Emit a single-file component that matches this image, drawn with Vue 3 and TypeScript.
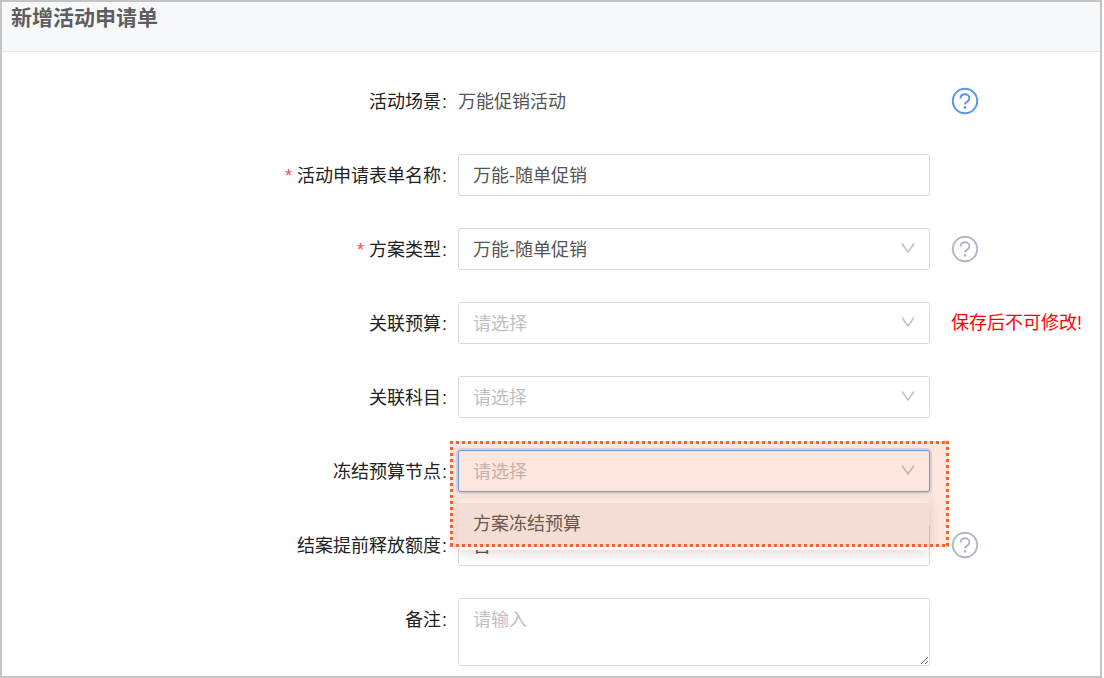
<script setup lang="ts">
interface Field {
  id: string
  label: string
  kind: 'text' | 'input' | 'select' | 'textarea'
  value?: string
  placeholder?: string
  required?: boolean
  help?: 'active' | 'muted'
  note?: string
  open?: boolean
}

const fields: Field[] = [
  { id: 'scene', label: '活动场景', kind: 'text', value: '万能促销活动', help: 'active' },
  { id: 'name', label: '活动申请表单名称', kind: 'input', value: '万能-随单促销', required: true },
  { id: 'plan', label: '方案类型', kind: 'select', value: '万能-随单促销', required: true, help: 'muted' },
  { id: 'budget', label: '关联预算', kind: 'select', placeholder: '请选择', note: '保存后不可修改!' },
  { id: 'subject', label: '关联科目', kind: 'select', placeholder: '请选择' },
  { id: 'node', label: '冻结预算节点', kind: 'select', placeholder: '请选择', open: true },
  { id: 'release', label: '结案提前释放额度', kind: 'input', value: '否', help: 'muted' },
  { id: 'remark', label: '备注', kind: 'textarea', placeholder: '请输入' },
]
</script>

<template>
  <main class="frame">
    <header class="header">
      <h1>新增活动申请单</h1>
    </header>
    <form class="form" @submit.prevent>
      <div v-for="f in fields" :key="f.id" class="row">
        <label class="label" :for="f.id">
          <span v-if="f.required" class="star">*</span>{{ f.label }}<span class="colon">:</span>
        </label>
        <div class="control">
          <output v-if="f.kind === 'text'" :id="f.id" class="plain">{{ f.value }}</output>
          <input v-else-if="f.kind === 'input'" :id="f.id" class="box line" type="text" :value="f.value" />
          <textarea
            v-else-if="f.kind === 'textarea'"
            :id="f.id"
            class="box area"
            :placeholder="f.placeholder"
          ></textarea>
          <template v-else>
            <select :id="f.id" class="box" :class="{ empty: !f.value, focused: f.open }">
              <option>{{ f.value ?? f.placeholder }}</option>
            </select>
            <svg class="arrow" viewBox="0 0 14 12" aria-hidden="true">
              <path d="M1 1.5 7 10 13 1.5" />
            </svg>
          </template>
          <template v-if="f.open">
            <ul class="menu" role="listbox">
              <li role="option" aria-selected="false">方案冻结预算</li>
            </ul>
            <div class="highlight"></div>
          </template>
        </div>
        <div class="extra">
          <button v-if="f.help" type="button" class="help" :class="f.help" aria-label="帮助">
            <svg viewBox="0 0 28 28" aria-hidden="true">
              <circle cx="14" cy="14" r="12.2" />
              <path d="M9.6 11.4C9.6 8.9 11.5 7.3 14 7.3s4.4 1.6 4.4 3.9c0 1.9-1.1 2.9-2.6 3.7-1.2.7-1.8 1.2-1.8 2.6" />
              <circle class="dot" cx="14" cy="20.4" r="1.3" />
            </svg>
          </button>
          <span v-if="f.note" class="note">{{ f.note }}</span>
        </div>
      </div>
    </form>
  </main>
</template>

<style>
body {
  background: #fff;
}
</style>

<style scoped>
.frame {
  box-sizing: border-box;
  min-height: 100vh;
  margin-right: 2px;
  border: 2px solid #c4c4c4;
  background: #fff;
  font-family: "Liberation Sans", "Noto Sans CJK SC", sans-serif;
  font-size: 18px;
  line-height: 28px;
  color: #555;
}
.header {
  box-sizing: border-box;
  height: 50px;
  padding: 2px 9px;
  border-bottom: 1px solid #e6e7ea;
  background: #f7f8fa;
}
h1 {
  margin: 0;
  font-size: 21px;
  font-weight: 700;
  color: #5e5e5e;
}
.form {
  display: flex;
  flex-direction: column;
  gap: 32px;
  padding: 28px 0 10px;
}
.row {
  display: grid;
  grid-template-columns: minmax(0, 456fr) minmax(0, 472fr) minmax(0, 170fr);
}
.label {
  padding: 8px 11px 6px 0;
  text-align: right;
  white-space: nowrap;
  color: #222;
}
.star {
  margin-right: 5px;
  color: #ff4d4f;
}
.colon {
  margin-left: 1px;
}
.control {
  position: relative;
}
.plain {
  display: block;
  padding: 8px 0 6px;
}
.box {
  box-sizing: border-box;
  display: block;
  width: 100%;
  height: 42px;
  margin: 0;
  padding: 7px 14px 5px;
  border: 1px solid #d9d9d9;
  border-radius: 3px;
  outline: none;
  appearance: none;
  background: #fff;
  font: inherit;
  color: #555;
}
.line {
  padding: 5px 14px 7px;
}
.empty,
.box::placeholder {
  color: #bfbfbf;
}
.area {
  height: 68px;
  resize: vertical;
}
.focused {
  border-color: #57a8f5;
  box-shadow: 0 0 0 2px rgba(24, 110, 255, 0.2);
}
.arrow {
  position: absolute;
  top: 14px;
  right: 15px;
  width: 14px;
  height: 12px;
  fill: none;
  stroke: #bfbfbf;
  stroke-width: 1.5;
  pointer-events: none;
}
.menu {
  position: absolute;
  z-index: 1;
  top: 48px;
  left: 0;
  right: 1px;
  margin: 0;
  padding: 5px 0;
  border-radius: 4px;
  background: #fff;
  box-shadow: 0 3px 12px rgba(0, 0, 0, 0.15);
  list-style: none;
}
.menu li {
  padding: 7px 15px;
  background: #f5f5f5;
}
.highlight {
  --dot: #ee642c;
  position: absolute;
  z-index: 2;
  top: -9px;
  left: -8px;
  right: -19px;
  height: 106px;
  background:
    repeating-linear-gradient(90deg, var(--dot) 0 3px, transparent 3px 6px) top / 100% 3px no-repeat,
    repeating-linear-gradient(90deg, var(--dot) 0 3px, transparent 3px 6px) bottom / 100% 3px no-repeat,
    repeating-linear-gradient(180deg, var(--dot) 0 3px, transparent 3px 6px) left / 3px 100% no-repeat,
    repeating-linear-gradient(180deg, var(--dot) 0 3px, transparent 3px 6px) right / 3px 100% no-repeat,
    rgba(238, 100, 44, 0.16);
  pointer-events: none;
}
.extra {
  display: flex;
  align-items: center;
  height: 42px;
  padding-left: 21px;
  white-space: nowrap;
}
.help {
  width: 28px;
  height: 28px;
  padding: 0;
  border: 0;
  background: none;
  color: #b1b8c8;
}
.help.active {
  color: #5b93f5;
}
.help svg {
  display: block;
  fill: none;
  stroke: currentColor;
  stroke-width: 2;
}
.help .dot {
  fill: currentColor;
  stroke: none;
}
.note {
  color: #f00;
}
</style>
